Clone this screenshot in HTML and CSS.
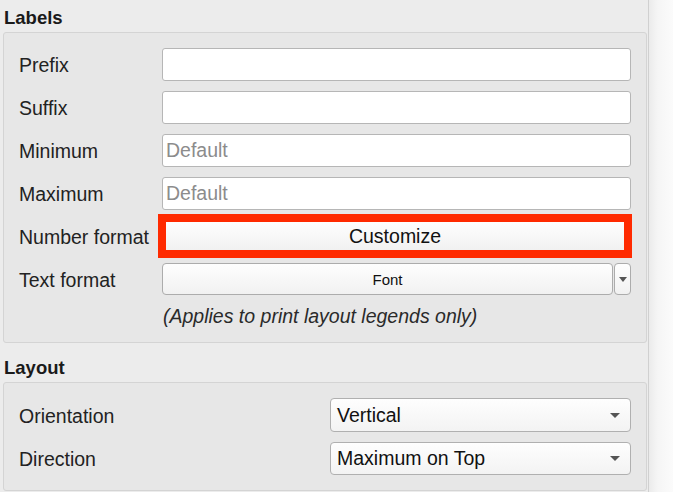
FILE: index.html
```html
<!DOCTYPE html>
<html>
<head>
<meta charset="utf-8">
<link rel="stylesheet" href="styles.css">
</head>
<body>
<div class="window">
  <div class="panel">
    <section class="section">
      <h2 class="heading">Labels</h2>
      <div class="group grid-labels">
        <label class="lbl">Prefix</label>
        <div class="field"><input class="input" type="text"></div>
        <label class="lbl">Suffix</label>
        <div class="field"><input class="input" type="text"></div>
        <label class="lbl">Minimum</label>
        <div class="field"><input class="input" type="text" placeholder="Default"></div>
        <label class="lbl">Maximum</label>
        <div class="field"><input class="input" type="text" placeholder="Default"></div>
        <label class="lbl">Number format</label>
        <div class="field"><button class="btn btn-highlight">Customize</button></div>
        <label class="lbl">Text format</label>
        <div class="field split">
          <button class="btn btn-font">Font</button>
          <button class="btn btn-arrow"><span class="tri"></span></button>
        </div>
        <div class="note">(Applies to print layout legends only)</div>
      </div>
    </section>
    <section class="section section-layout">
      <h2 class="heading">Layout</h2>
      <div class="group grid-layout">
        <label class="lbl">Orientation</label>
        <div class="combo"><span class="combo-text">Vertical</span><span class="tri"></span></div>
        <label class="lbl">Direction</label>
        <div class="combo"><span class="combo-text">Maximum on Top</span><span class="tri"></span></div>
      </div>
    </section>
  </div>
  <div class="strip"></div>
</div>
</body>
</html>
```

FILE: styles.css
```css
* { box-sizing: border-box; }

html, body {
  margin: 0;
  padding: 0;
  height: 100%;
  background: #ececec;
  font-family: "Liberation Sans", Arial, Helvetica, sans-serif;
  color: #1e1e1e;
  overflow: hidden;
}

.window {
  display: flex;
  height: 492px;
  width: 673px;
}

.panel {
  width: 648px;
  flex: none;
  padding: 0 1px 0 3px;
  display: flex;
  flex-direction: column;
}

.section { margin-top: 7px; }
.section-layout { margin-top: 14px; }

.heading {
  margin: 0 0 3px 1px;
  height: 22px;
  line-height: 22px;
  font-size: 18.5px;
  font-weight: bold;
  color: #1a1a1a;
}

.group {
  background: #e7e7e7;
  border: 1px solid #d4d4d4;
  border-radius: 3px;
  padding: 15px;
  display: grid;
  row-gap: 10px;
  align-items: center;
}

.grid-labels { grid-template-columns: 143px 1fr; }
.grid-layout { grid-template-columns: 311px 1fr; padding-bottom: 15px; }

.lbl {
  font-size: 19.5px;
  line-height: 22px;
  color: #222;
  white-space: nowrap;
  padding-top: 1px;
}

.field { height: 33px; display: flex; }

.input {
  width: 100%;
  height: 33px;
  border: 1px solid #b6b6b6;
  border-radius: 3px;
  background: #fff;
  padding: 0 3px;
  font-family: inherit;
  font-size: 19.5px;
  color: #222;
  outline: none;
}
.input::placeholder { color: #8c8c8c; }

.btn {
  font-family: inherit;
  color: #111;
  border: 1px solid #acacac;
  border-radius: 4px;
  background: linear-gradient(#fefefe, #f1f1f1);
  padding: 0;
  margin: 0;
}

.btn-highlight {
  margin: 1px 6px 0 3px;
  width: 100%;
  height: 30px;
  font-size: 19.5px;
  outline: 7px solid #ff2a00;
  border-color: #ff2a00;
  border-radius: 0;
}

.split { height: 32px; gap: 1px; }
.btn-font {
  flex: 1;
  height: 32px;
  font-size: 15px;
}
.btn-arrow {
  width: 17px;
  height: 32px;
  display: flex;
  align-items: center;
  justify-content: center;
}

.tri {
  width: 0;
  height: 0;
  border-left: 5px solid transparent;
  border-right: 5px solid transparent;
  border-top: 5px solid #555;
}
.btn-arrow .tri {
  border-left-width: 4px;
  border-right-width: 4px;
}

.note {
  grid-column: 2;
  font-size: 19.5px;
  line-height: 22px;
  font-style: italic;
  color: #2a2a2a;
  padding-left: 1px;
}

.combo {
  height: 34px;
  border: 1px solid #b0b0b0;
  border-radius: 4px;
  background: linear-gradient(#fefefe, #f3f3f3);
  display: flex;
  align-items: center;
  justify-content: space-between;
  padding: 0 10px 0 6px;
}
.combo + .lbl + .combo { height: 33px; }
.combo-text {
  font-size: 19.5px;
  color: #111;
}

.strip {
  flex: 1;
  border-left: 1px solid #d0d0d0;
  background: linear-gradient(to right, #ebebeb, #f5f5f5 35%, #fbfbfb);
}
```
